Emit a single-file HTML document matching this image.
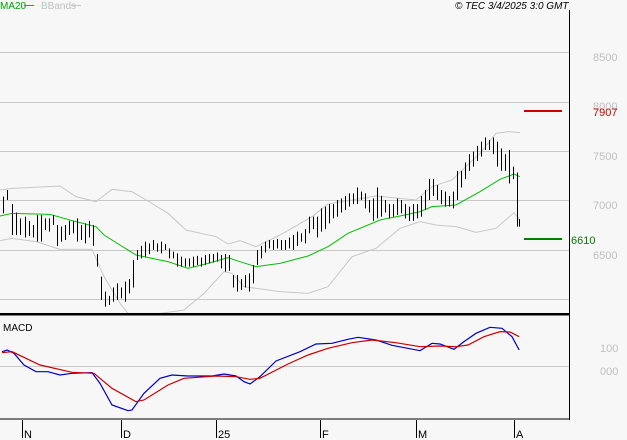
<!DOCTYPE html>
<html><head><meta charset="utf-8"><style>
html,body{margin:0;padding:0;background:#f7f7f7;}
svg{display:block;font-family:"Liberation Sans",sans-serif;}
</style></head><body>
<svg width="627" height="440" viewBox="0 0 627 440" xmlns="http://www.w3.org/2000/svg">
<rect width="627" height="440" fill="#f7f7f7"/>
<g stroke="#c8c8c8" stroke-width="1">
<line x1="0" y1="52.5" x2="569" y2="52.5"/><line x1="0" y1="102.5" x2="569" y2="102.5"/>
<line x1="0" y1="151.5" x2="569" y2="151.5"/><line x1="0" y1="200.5" x2="569" y2="200.5"/>
<line x1="0" y1="250.5" x2="569" y2="250.5"/><line x1="0" y1="299.5" x2="569" y2="299.5"/>
<line x1="0" y1="366.5" x2="569" y2="366.5"/>
</g>
<g transform="scale(0.4,0.33333)" fill="none">
<polyline vector-effect="non-scaling-stroke" stroke="#c8c8c8" stroke-width="1" points="0,570 30,565 150,558 190,590 240,605 280,568 330,575 370,603 420,640 465,690 540,710 570,732 600,722 640,740 700,705 780,650 820,612 880,600 940,588 1040,600 1080,560 1130,540 1160,505 1200,460 1240,400 1270,395 1300,398"/>
<polyline vector-effect="non-scaling-stroke" stroke="#c8c8c8" stroke-width="1" points="0,722 30,715 90,725 150,748 230,748 260,830 300,910 320,940 400,940 460,930 510,880 560,815 580,820 610,860 700,875 770,880 820,860 880,770 940,745 1000,685 1050,665 1090,675 1140,680 1190,697 1240,685 1285,638 1300,660"/>
<polyline vector-effect="non-scaling-stroke" stroke="#00c000" stroke-width="1" points="0,648 30,640 125,643 180,662 240,680 260,705 300,735 340,765 380,775 420,785 470,805 520,790 570,773 600,785 640,800 700,790 770,768 820,740 870,700 950,660 1000,648 1050,635 1080,620 1140,615 1200,575 1250,538 1285,522 1300,530"/>
<polyline vector-effect="non-scaling-stroke" stroke="#0000cc" stroke-width="1.2" points="5,1055 18,1050 35,1060 60,1095 90,1115 120,1115 150,1125 180,1120 230,1118 250,1150 280,1215 320,1232 330,1230 360,1180 400,1135 430,1125 470,1128 530,1128 560,1122 590,1128 610,1145 625,1152 650,1130 690,1083 750,1055 790,1032 830,1030 870,1018 895,1012 940,1020 980,1036 1050,1052 1080,1030 1100,1032 1135,1048 1160,1025 1190,1000 1225,982 1255,985 1280,1010 1298,1050"/>
<polyline vector-effect="non-scaling-stroke" stroke="#cc0000" stroke-width="1.2" points="5,1058 30,1055 100,1095 180,1117 235,1120 280,1165 340,1205 360,1200 420,1155 460,1135 540,1128 590,1130 625,1138 650,1135 720,1092 770,1065 820,1045 880,1028 930,1020 990,1028 1050,1040 1100,1038 1140,1040 1170,1035 1210,1010 1250,995 1275,996 1298,1010"/>
</g>
<g transform="scale(1,0.8333)" stroke="#000" stroke-width="1">
<path vector-effect="non-scaling-stroke" d="M3.5 236V256M7.5 228V240M12.5 245V282M16.5 255V282M20.5 262V282M25.5 260V285M29.5 265V283M33.5 270V285M37.5 258V290M41.5 258V290M45.5 262V276M49.5 262V278M53.5 258V270M57.5 270V295M61.5 272V290M65.5 270V288M69.5 265V282M73.5 265V280M77.5 262V290M81.5 270V288M85.5 268V292M89.5 265V285M93.5 270V295M97.5 305V320M101.5 332V360M105.5 350V368M109.5 355V366M113.5 345V362M117.5 340V360M121.5 345V358M125.5 338V362M129.5 335V352M133.5 312V345M137.5 300V312M141.5 295V310M145.5 290V308M149.5 292V305M153.5 288V300M157.5 292V302M161.5 290V304M165.5 293V300M169.5 298V310M173.5 302V310M177.5 304V320M181.5 308V320M185.5 310V320M189.5 310V320M193.5 308V320M197.5 307V318M201.5 309V320M205.5 306V318M209.5 305V316M213.5 305V315M217.5 303V314M221.5 306V322M225.5 305V326M229.5 306V325M233.5 330V345M237.5 330V350M241.5 335V348M245.5 330V345M249.5 328V350M253.5 318V340M257.5 300V318M261.5 295V310M265.5 290V303M269.5 288V298M273.5 288V300M277.5 287V298M281.5 288V300M285.5 288V300M289.5 285V298M293.5 282V300M297.5 278V295M301.5 280V290M305.5 275V292M309.5 260V280M313.5 260V275M317.5 260V285M321.5 250V278M325.5 248V275M329.5 245V268M333.5 245V262M337.5 240V260M341.5 238V255M345.5 235V252M349.5 232V248M353.5 232V245M357.5 225V245M361.5 230V240M365.5 232V250M369.5 240V255M373.5 238V265M377.5 225V262M381.5 235V260M385.5 240V255M389.5 245V262M393.5 245V260M397.5 238V258M401.5 240V256M405.5 245V262M409.5 248V265M413.5 245V265M417.5 245V262M421.5 235V260M425.5 228V252M429.5 215V240M433.5 215V235M437.5 222V240M441.5 228V245M445.5 230V248M449.5 235V248M453.5 230V250M457.5 205V240M461.5 205V225M465.5 195V215M469.5 185V205M473.5 182V200M477.5 175V193M481.5 170V188M485.5 165V180M489.5 168V180M493.5 165V185M497.5 170V200M501.5 178V205M505.5 185V205M509.5 180V220M513.5 200V215M517.5 207V272M519.5 263V272"/>
</g>
<line x1="569.5" y1="10" x2="569.5" y2="420" stroke="#000"/>
<rect x="0" y="313" width="569" height="2.5" fill="#000"/>
<line x1="0" y1="419" x2="569" y2="419" stroke="#000"/>
<g stroke="#000"><line x1="22.5" y1="420" x2="22.5" y2="438"/><line x1="121.5" y1="420" x2="121.5" y2="438"/><line x1="216.5" y1="420" x2="216.5" y2="438"/><line x1="320.5" y1="420" x2="320.5" y2="438"/><line x1="416.5" y1="420" x2="416.5" y2="438"/><line x1="514.5" y1="420" x2="514.5" y2="438"/></g>
<g font-size="11" fill="#000"><text x="24" y="438">N</text><text x="123" y="438">D</text><text x="218" y="438">25</text><text x="322" y="438">F</text><text x="418" y="438">M</text><text x="516" y="438">A</text></g>
<rect x="524" y="110" width="38" height="2" fill="#cc0000"/>
<rect x="524" y="238" width="38" height="2" fill="#008000"/>
<g font-size="11" fill="#c0c0c0"><text x="593" y="61">8500</text><text x="593" y="110">8000</text><text x="593" y="160">7500</text><text x="593" y="209">7000</text><text x="593" y="259">6500</text><text x="600" y="352">100</text><text x="600" y="375">000</text></g>
<text x="593" y="116" font-size="11" fill="#cc0000">7907</text>
<text x="571" y="244" font-size="11" fill="#008000">6610</text>
<text x="3" y="331" font-size="10" fill="#000">MACD</text>
<text x="0" y="9" font-size="10" fill="#00a000">MA20</text>
<line x1="24" y1="5.5" x2="34" y2="5.5" stroke="#00c000"/>
<text x="41" y="9" font-size="10" fill="#c0c0c0">BBands</text>
<line x1="71" y1="5.5" x2="81" y2="5.5" stroke="#c8c8c8"/>
<text x="455" y="9" font-size="10" font-style="italic" fill="#000">© TEC 3/4/2025 3:0 GMT</text>
</svg>
</body></html>
